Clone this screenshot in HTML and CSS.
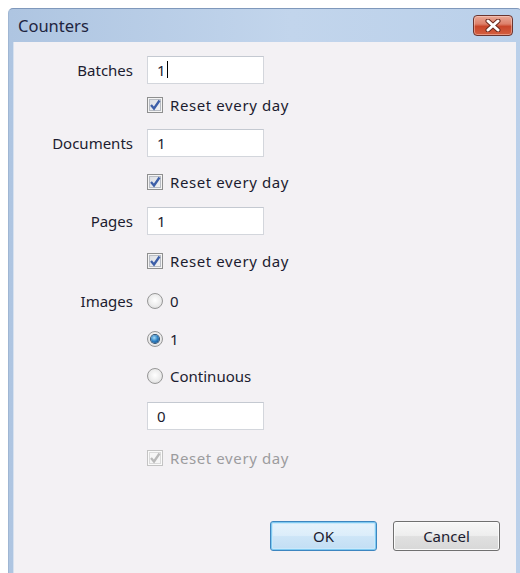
FILE: index.html
```html
<!DOCTYPE html>
<html>
<head>
<meta charset="utf-8">
<title>Counters</title>
<link rel="stylesheet" href="styles.css">
</head>
<body>
<div class="window">
  <div class="titlebar">
    <span class="title">Counters</span>
    <div class="close">
      <svg width="18" height="13" viewBox="0 0 18 13">
        <path d="M4 2 L14 11 M14 2 L4 11" stroke="#6b2a1e" stroke-width="5" stroke-linecap="round" fill="none"/>
        <path d="M4 2 L14 11 M14 2 L4 11" stroke="#ffffff" stroke-width="3" stroke-linecap="round" fill="none"/>
      </svg>
    </div>
  </div>
  <div class="client">
    <div class="form">
      <div class="label">Batches</div>
      <div class="field"><div class="input">1<span class="caret"></span></div></div>

      <div></div>
      <div class="field"><span class="check"><svg width="14" height="14" viewBox="0 0 14 14"><path d="M3 7 L6 10.5 L11.5 2.5" stroke="#3d5fa8" stroke-width="2.3" fill="none"/></svg></span><span class="opt reset">Reset every day</span></div>

      <div class="label">Documents</div>
      <div class="field"><div class="input">1</div></div>

      <div></div>
      <div class="field"><span class="check"><svg width="14" height="14" viewBox="0 0 14 14"><path d="M3 7 L6 10.5 L11.5 2.5" stroke="#3d5fa8" stroke-width="2.3" fill="none"/></svg></span><span class="opt reset">Reset every day</span></div>

      <div class="label">Pages</div>
      <div class="field"><div class="input">1</div></div>

      <div></div>
      <div class="field"><span class="check"><svg width="14" height="14" viewBox="0 0 14 14"><path d="M3 7 L6 10.5 L11.5 2.5" stroke="#3d5fa8" stroke-width="2.3" fill="none"/></svg></span><span class="opt reset">Reset every day</span></div>

      <div class="label">Images</div>
      <div class="field"><span class="radio"></span><span class="opt">0</span></div>

      <div></div>
      <div class="field"><span class="radio on"><span class="dot"></span></span><span class="opt">1</span></div>

      <div></div>
      <div class="field"><span class="radio"></span><span class="opt">Continuous</span></div>

      <div></div>
      <div class="field"><div class="input">0</div></div>

      <div></div>
      <div class="field disabled"><span class="check"><svg width="14" height="14" viewBox="0 0 14 14"><path d="M3 7 L6 10.5 L11.5 2.5" stroke="#b9b9b9" stroke-width="2.3" fill="none"/></svg></span><span class="opt reset">Reset every day</span></div>
    </div>
    <div class="footer">
      <div class="btn default">OK</div>
      <div class="btn">Cancel</div>
    </div>
  </div>
</div>
</body>
</html>
```
FILE: styles.css
```css
html, body {
  margin: 0;
  padding: 0;
  background: #ffffff;
  overflow: hidden;
  height: 573px;
}

body {
  font-family: "Noto Sans", "Open Sans", sans-serif;
  font-size: 15px;
  color: #1c1c30;
}

.window {
  margin: 8px 0 0 8px;
  width: 514px;
  height: 580px;
  box-sizing: border-box;
  border-top: 1px solid #7f98bb;
  border-left: 1px solid #9fb6d3;
  border-radius: 5px 5px 0 0;
  background: linear-gradient(to right, #aec5e1 0%, #c2d5ec 55%, #bad0ea 100%);
  display: flex;
  flex-direction: column;
  padding: 0 6px 0 4px;
}

.titlebar {
  height: 33px;
  display: flex;
  align-items: center;
  justify-content: space-between;
  padding: 0 3px 0 5px;
  flex-shrink: 0;
}

.title {
  font-size: 16.5px;
  color: #1e2440;
}

.close {
  width: 40px;
  height: 21px;
  box-sizing: border-box;
  border: 1px solid #6a3530;
  border-radius: 4px;
  background: linear-gradient(#eaa896 0%, #dd806a 42%, #c9462a 55%, #d35f40 100%);
  box-shadow: inset 0 0 0 1px rgba(255, 220, 210, 0.45);
  display: flex;
  align-items: center;
  justify-content: center;
}

.client {
  flex: 1;
  background: #f3f1f4;
  box-shadow: inset 1px 0 0 #d6e1ef;
}

.form {
  display: grid;
  grid-template-columns: 120px auto;
  grid-template-rows: 35px 36px 40px 38px 39px 41px 40px 36px 38px 41px 43px;
  column-gap: 14px;
  margin-top: 10px;
  align-items: center;
}

.label {
  text-align: right;
}

.field {
  display: flex;
  align-items: center;
}

.input {
  width: 117px;
  height: 28px;
  box-sizing: border-box;
  border: 1px solid #d3d6dc;
  border-top-color: #c4c9d1;
  background: #ffffff;
  padding-left: 9px;
  display: flex;
  align-items: center;
}

.caret {
  display: inline-block;
  width: 1px;
  height: 17px;
  background: #000000;
  margin-left: 1px;
}

.check {
  width: 16px;
  height: 16px;
  box-sizing: border-box;
  border: 1px solid #8e8f8f;
  background: linear-gradient(135deg, #d9dce1 0%, #f4f5f7 100%);
  box-shadow: inset 0 0 0 1px #f4f4f4, inset 0 0 0 2px #b8bcc3;
  display: flex;
  align-items: center;
  justify-content: center;
  flex-shrink: 0;
}

.opt {
  margin-left: 7px;
}

.reset {
  letter-spacing: 0.6px;
}

.disabled {
  color: #9c9c9e;
}

.disabled .check {
  border-color: #c3c3c3;
  background: #f6f6f6;
  box-shadow: inset 0 0 0 1px #fafafa, inset 0 0 0 2px #dadada;
}

.radio {
  width: 16px;
  height: 16px;
  box-sizing: border-box;
  border: 1px solid #979797;
  border-radius: 50%;
  background: radial-gradient(circle at 50% 45%, #ffffff 0%, #ececec 55%, #cfcfcf 100%);
  display: flex;
  align-items: center;
  justify-content: center;
  flex-shrink: 0;
}

.radio .dot {
  width: 8px;
  height: 8px;
  border-radius: 50%;
  background: radial-gradient(circle at 40% 35%, #a6dcf7 0%, #2b7fc3 50%, #123e74 100%);
  box-shadow: 0 0 0 1px #2f4f6e;
}

.footer {
  display: flex;
  justify-content: flex-end;
  gap: 16px;
  margin-top: 42px;
  padding-right: 16px;
}

.btn {
  width: 107px;
  height: 30px;
  box-sizing: border-box;
  border: 1px solid #707070;
  border-radius: 3px;
  background: linear-gradient(#f7f7f7 0%, #eeeeee 48%, #e0e0e0 52%, #d8d8d8 100%);
  box-shadow: inset 0 0 0 1px #fbfbfb;
  display: flex;
  align-items: center;
  justify-content: center;
}

.btn.default {
  border-color: #3c86c0;
  background: linear-gradient(#e6f3fc 0%, #dcedfa 48%, #cde5f7 52%, #c2def4 100%);
  box-shadow: inset 0 0 0 1px #7fc9f0, inset 0 0 0 2px #c8e8fb;
}
```
